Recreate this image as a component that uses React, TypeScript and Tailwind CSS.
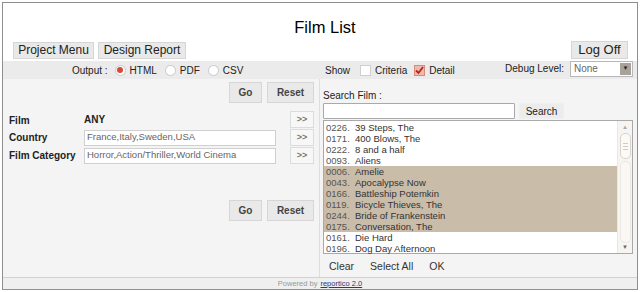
import React from "react";

const films = [
    { id: "0226", name: "39 Steps, The", sel: false },
    { id: "0171", name: "400 Blows, The", sel: false },
    { id: "0222", name: "8 and a half", sel: false },
    { id: "0093", name: "Aliens", sel: false },
    { id: "0006", name: "Amelie", sel: true },
    { id: "0043", name: "Apocalypse Now", sel: true },
    { id: "0166", name: "Battleship Potemkin", sel: true },
    { id: "0119", name: "Bicycle Thieves, The", sel: true },
    { id: "0244", name: "Bride of Frankenstein", sel: true },
    { id: "0175", name: "Conversation, The", sel: true },
    { id: "0161", name: "Die Hard", sel: false },
    { id: "0196", name: "Dog Day Afternoon", sel: false },
];

function Btn({ children, className = "" }: { children: React.ReactNode; className?: string }) {
    return (
        <div className={`flex items-center justify-center border border-[#d6d6d6] bg-[#e9e9e9] text-[#222] ${className}`}>
            {children}
        </div>
    );
}

function Radio({ on }: { on?: boolean }) {
    return (
        <span className="flex h-[11px] w-[11px] items-center justify-center rounded-full border border-[#c8c8c8] bg-white">
            {on && <span className="h-[6px] w-[6px] rounded-full bg-[#d8473a]" />}
        </span>
    );
}

function Check({ on }: { on?: boolean }) {
    return (
        <span className={`flex h-[11px] w-[11px] items-center justify-center border ${on ? "border-[#d98a7c] bg-[#f2b8ac]" : "border-[#cfcfcf] bg-white"}`}>
            {on && (
                <svg width="9" height="9" viewBox="0 0 9 9">
                    <path d="M1 4.5 L3.5 7 L8 1" stroke="#b3261e" strokeWidth="1.8" fill="none" />
                </svg>
            )}
        </span>
    );
}

function Arrow() {
    return <Btn className="h-[17px] w-[24px] border-[#dcdcdc] bg-[#f7f7f7] text-[9px] text-[#777]">&gt;&gt;</Btn>;
}

export default function App() {
    return (
        <div className="h-[292px] w-[640px] bg-white p-[2px] font-['Liberation_Sans',Arial,sans-serif]">
            <div className="flex h-[288px] flex-col border border-[#8f8f8f] bg-[#f4f4f4]">
                {/* Header */}
                <div className="bg-white">
                    <div className="pl-[10px] pt-[13px] text-center text-[16.5px] leading-[22px] text-black">Film List</div>
                    <div className="flex items-center px-[10px] pb-[2px] pt-[3px] text-[12px]">
                        <Btn className="h-[17px] w-[81px]">Project Menu</Btn>
                        <Btn className="ml-[4px] h-[17px] w-[88px]">Design Report</Btn>
                        <Btn className="ml-auto mr-[-1px] h-[18px] w-[57px] text-[13px]">Log Off</Btn>
                    </div>
                </div>

                {/* Options bar */}
                <div className="flex h-[18px] items-center bg-[#ebebeb] text-[10px] text-[#222]">
                    <div className="flex w-[317px] items-center gap-[4px] pl-[69px]">
                        <span className="mr-[3px]">Output :</span>
                        <Radio on />
                        <span className="mr-[4px]">HTML</span>
                        <Radio />
                        <span className="mr-[4px]">PDF</span>
                        <Radio />
                        <span>CSV</span>
                    </div>
                    <div className="flex flex-1 items-center gap-[4px] pl-[5px]">
                        <span className="mr-[6px]">Show</span>
                        <Check />
                        <span className="mr-[3px]">Criteria</span>
                        <Check on />
                        <span>Detail</span>
                        <span className="ml-auto mb-[4px] mr-[2px]">Debug Level:</span>
                        <div className="mb-[3px] mr-[4px] flex h-[16px] w-[63px] items-center justify-between border border-[#b8b8b8] bg-white pl-[3px] pr-[1px] text-[#666]">
                            <span>None</span>
                            <span className="flex h-[12px] w-[11px] items-center justify-center bg-[#a8a29a] text-[6px] text-[#222]">▼</span>
                        </div>
                    </div>
                </div>

                {/* Main */}
                <div className="flex flex-1">
                    {/* Left panel */}
                    <div className="flex w-[317px] flex-col border-r border-[#dedede] text-[10px]">
                        <div className="flex justify-end gap-[5px] pr-[5px] pt-[3px]">
                            <Btn className="h-[21px] w-[33px] font-bold text-[10px] text-[#444]">Go</Btn>
                            <Btn className="h-[21px] w-[47px] font-bold text-[10px] text-[#444]">Reset</Btn>
                        </div>
                        <div className="mt-[8px] grid grid-cols-[70px_192px_33px] items-center gap-x-[5px] gap-y-[1px] pl-[6px] font-bold text-[10px] text-[#222]">
                            <div className="mt-[2px]">Film</div>
                            <div className="self-start pt-[1px]">ANY</div>
                            <div className="justify-self-end"><Arrow /></div>
                            <div>Country</div>
                            <div className="flex h-[16px] items-center border border-[#d0d0d0] bg-white pl-[2px] font-normal text-[9.5px] text-[#666]">
                                France,Italy,Sweden,USA
                            </div>
                            <div className="justify-self-end"><Arrow /></div>
                            <div>Film Category</div>
                            <div className="flex h-[16px] items-center border border-[#d0d0d0] bg-white pl-[2px] font-normal text-[9.5px] text-[#666]">
                                Horror,Action/Thriller,World Cinema
                            </div>
                            <div className="justify-self-end"><Arrow /></div>
                        </div>
                        <div className="mt-[36px] flex justify-end gap-[5px] pr-[5px]">
                            <Btn className="h-[21px] w-[33px] font-bold text-[10px] text-[#444]">Go</Btn>
                            <Btn className="h-[21px] w-[47px] font-bold text-[10px] text-[#444]">Reset</Btn>
                        </div>
                    </div>

                    {/* Right panel */}
                    <div className="flex flex-1 flex-col pl-[3px] pt-[11px] text-[10px] text-[#222]">
                        <div className="leading-[11px]">Search Film :</div>
                        <div className="mt-[2px] flex items-center">
                            <div className="h-[16px] w-[192px] rounded-[1px] border border-[#a9a9a9] bg-white" />
                            <Btn className="ml-[4px] h-[16px] w-[45px] border-[#efefef] bg-[#ececec] text-[10px]">Search</Btn>
                        </div>
                        <div className="mt-[1px] flex h-[134px] w-[310px] border border-[#a9a9a9] bg-white">
                            <div className="flex flex-1 flex-col pt-[1px]">
                                {films.map((f) => (
                                    <div
                                        key={f.id}
                                        className={`flex h-[11px] items-center pl-[2px] text-[9.5px] leading-[11px] ${f.sel ? "bg-[#c9bca9] text-[#333]" : "text-[#333]"}`}
                                    >
                                        <span className="w-[29px] text-[#555]">{f.id}.</span>
                                        <span>{f.name}</span>
                                    </div>
                                ))}
                            </div>
                            <div className="flex w-[15px] flex-col items-center border-l border-[#ebe8e2] bg-[#f6f5f1] py-[2px]">
                                <span className="text-[6px] leading-[8px] text-[#aaa]">▲</span>
                                <div className="mt-[2px] flex h-[26px] w-[11px] flex-col items-center justify-center gap-[2px] rounded-[5px] border border-[#d8d4cc] bg-[#fbfaf7]">
                                    <span className="h-px w-[5px] bg-[#ccc]" />
                                    <span className="h-px w-[5px] bg-[#ccc]" />
                                    <span className="h-px w-[5px] bg-[#ccc]" />
                                </div>
                                <div className="mt-[2px] w-[11px] flex-1 rounded-[5px] border border-[#ece9e3] bg-[#f9f8f5]" />
                                <span className="text-[6px] leading-[8px] text-[#666]">▼</span>
                            </div>
                        </div>
                        <div className="flex items-center gap-[16px] pl-[6px] pt-[5px] text-[10.5px] text-[#333]">
                            <span>Clear</span>
                            <span>Select All</span>
                            <span>OK</span>
                        </div>
                    </div>
                </div>

                {/* Footer */}
                <div className="flex h-[12px] items-center justify-center border-t border-[#d2d2d2] bg-[#efefef] text-[7.5px] text-[#999]">
                    <span>Powered by</span>
                    <span className="ml-[3px] text-[#33337a] underline">reportico 2.0</span>
                </div>
            </div>
        </div>
    );
}
